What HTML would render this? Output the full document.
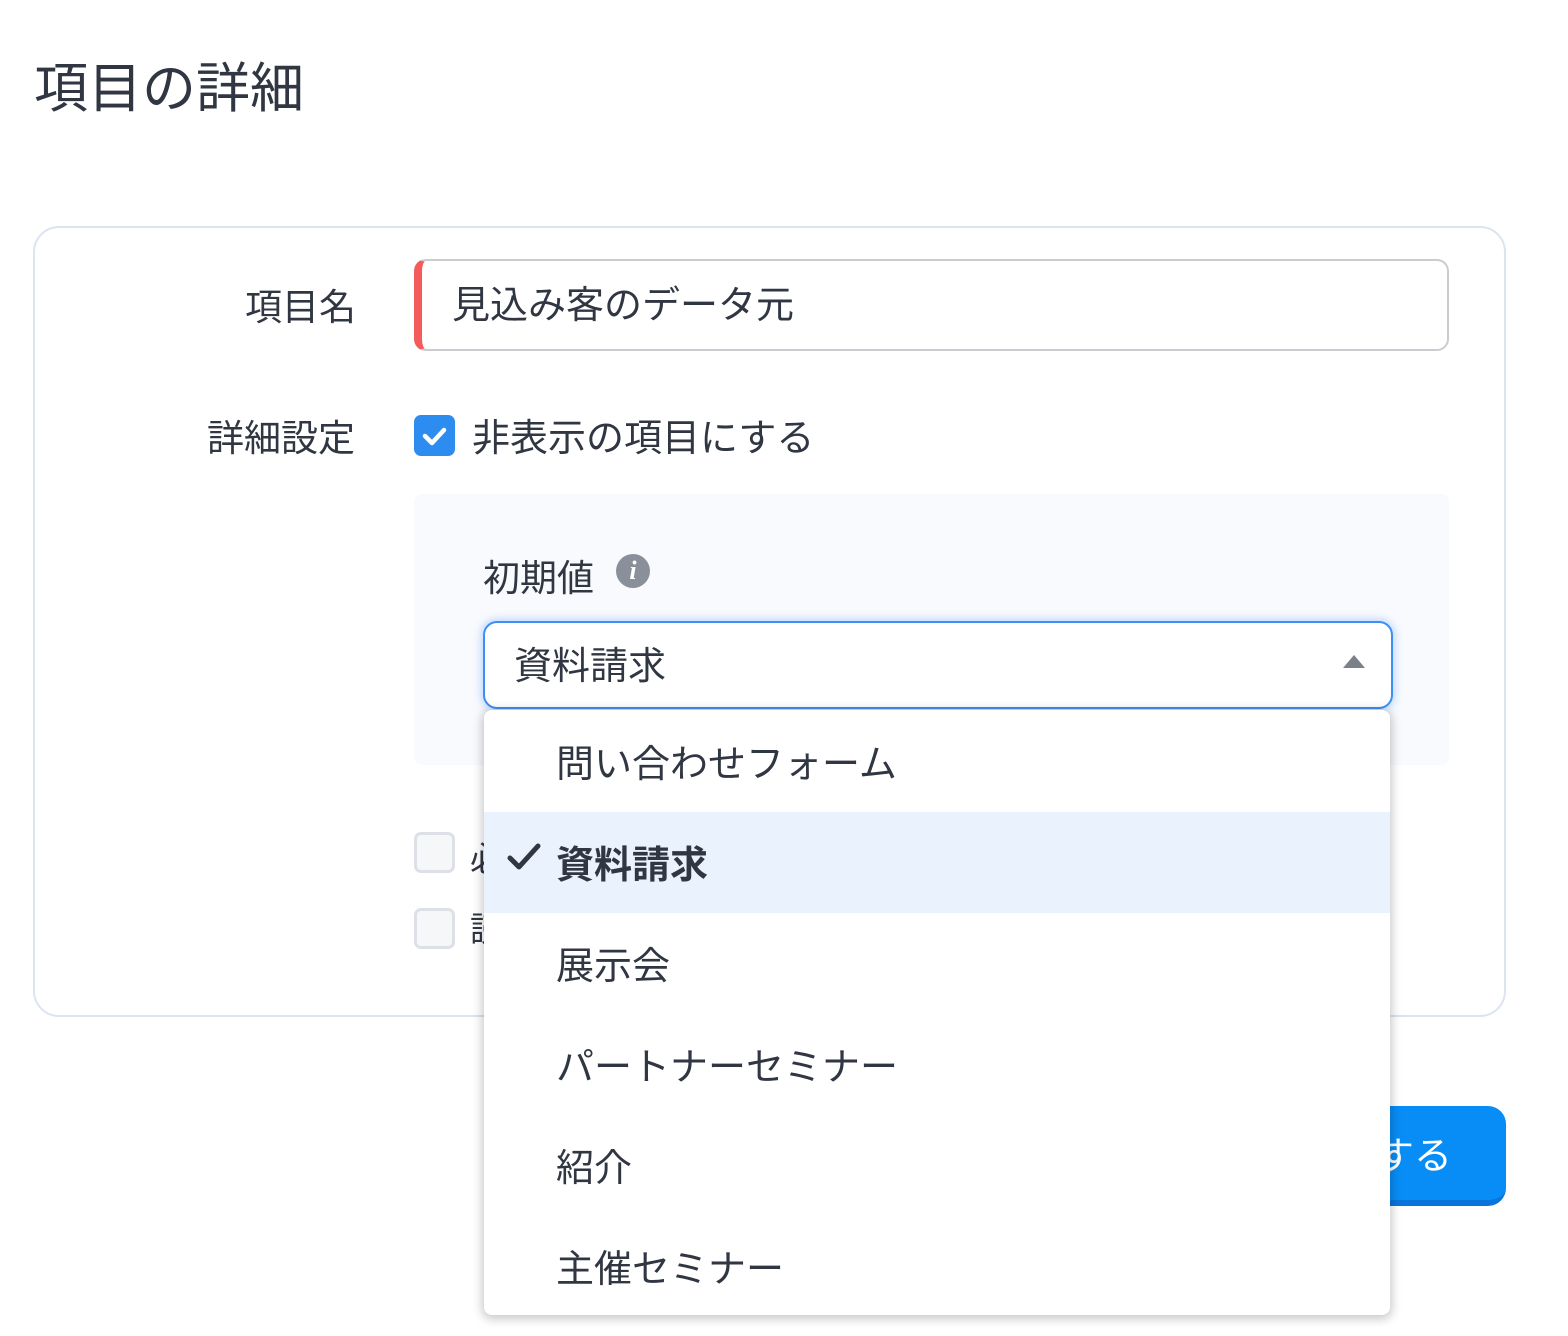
<!DOCTYPE html>
<html><head><meta charset="utf-8"><style>
*{box-sizing:border-box;margin:0;padding:0}
body{width:1568px;height:1336px;background:#fff;position:relative;overflow:hidden;font-family:"Liberation Sans","Noto Sans CJK JP",sans-serif;color:#303642}
.a{position:absolute;white-space:nowrap}
.it{height:101px;padding-left:72px;font-size:38px;line-height:109px;}
</style></head><body>
<div class="a" style="left:34px;top:56px;font-size:54px;line-height:66px;">項目の詳細</div>
<div class="a" style="left:33px;top:226px;width:1473px;height:791px;border:2px solid #dbe4ef;border-radius:26px;"></div>
<div class="a" style="left:245px;top:286px;font-size:37px;line-height:44px;">項目名</div>
<div class="a" style="left:414px;top:259px;width:1035px;height:92px;border:2px solid #c9ccd1;border-left:8px solid #f45b5b;border-radius:12px;"></div>
<div class="a" style="left:452px;top:284px;font-size:38px;line-height:44px;">見込み客のデータ元</div>
<div class="a" style="left:207px;top:417px;font-size:37px;line-height:44px;">詳細設定</div>
<div class="a" style="left:414px;top:415px;width:41px;height:41px;background:#2d8cf0;border-radius:7px;"><svg width="41" height="41"><path d="M11 21l7 7 12-13" stroke="#fff" stroke-width="4.5" fill="none" stroke-linecap="round" stroke-linejoin="round"/></svg></div>
<div class="a" style="left:472px;top:416px;font-size:38px;line-height:46px;">非表示の項目にする</div>
<div class="a" style="left:414px;top:494px;width:1035px;height:271px;background:#f8fafe;border-radius:8px;"></div>
<div class="a" style="left:483px;top:557px;font-size:37px;line-height:44px;">初期値</div>
<div class="a" style="left:616px;top:554px;width:34px;height:34px;border-radius:50%;background:#8a9099;color:#fff;font:italic bold 26px/34px 'Liberation Serif',serif;text-align:center;">i</div>
<div class="a" style="left:483px;top:621px;width:910px;height:88px;border:2px solid #3d8ff5;border-radius:14px;background:#fff;box-shadow:0 0 8px 2px rgba(80,150,245,.35);"></div>
<div class="a" style="left:514px;top:644px;font-size:38px;line-height:46px;">資料請求</div>
<div class="a" style="left:1343px;top:655px;width:0;height:0;border-left:11px solid transparent;border-right:11px solid transparent;border-bottom:13px solid #7b8089;"></div>
<div class="a" style="left:414px;top:832px;width:41px;height:41px;border:3px solid #dde1e7;border-radius:7px;background:#f6f7f9"></div>
<div class="a" style="left:414px;top:908px;width:41px;height:41px;border:3px solid #dde1e7;border-radius:7px;background:#f6f7f9"></div>
<div class="a" style="left:470px;top:840px;font-size:34px;line-height:40px;">必</div>
<div class="a" style="left:470px;top:910px;font-size:34px;line-height:40px;">読</div>
<div class="a" style="left:1150px;top:1106px;width:356px;height:100px;background:#088df6;border-bottom:6px solid #0a74dc;border-radius:18px;"></div>
<div class="a" style="left:1300px;top:1134px;font-size:38px;line-height:46px;color:#fff">保存する</div>
<div class="a" style="left:484px;top:710px;width:906px;height:605px;background:#fff;border-radius:8px;box-shadow:0 2px 10px 2px rgba(0,0,0,.22);overflow:hidden;padding-top:1px;">
<div class="it">問い合わせフォーム</div>
<div class="it" style="background:#eaf3fd;font-weight:bold;position:relative;"><svg style="position:absolute;left:22px;top:30px" width="36" height="30"><path d="M4 16l9 9 19-21" stroke="#303642" stroke-width="5" fill="none" stroke-linecap="round" stroke-linejoin="round"/></svg>資料請求</div>
<div class="it">展示会</div>
<div class="it">パートナーセミナー</div>
<div class="it">紹介</div>
<div class="it">主催セミナー</div>
</div>
</body></html>
